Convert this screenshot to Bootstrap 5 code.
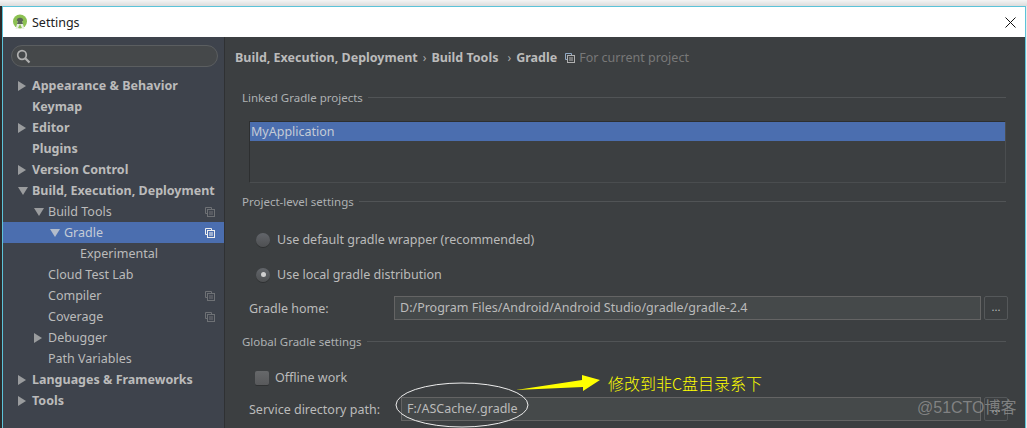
<!DOCTYPE html>
<html lang="zh">
<head>
<meta charset="utf-8">
<title>Settings</title>
<link href="https://cdn.jsdelivr.net/npm/bootstrap@5.3.0/dist/css/bootstrap.min.css" rel="stylesheet">
<style>
html,body{height:428px;overflow:hidden;background:#ececec;}
body{font-family:"Noto Sans","Noto Sans CJK SC",sans-serif;font-size:12.5px;line-height:21px;position:relative;}
.strip-top{height:6px;background:linear-gradient(#f4f4f4,#dcdcdc);}
.strip-left{width:2px;background:#2b2b2b;}
.win{width:1024px;height:422px;border:1px solid #5cc3d9;border-bottom:0;margin-right:1px;background:#3c3f41;}
.titlebar{height:30px;background:#fff;color:#222;padding-left:9px;}
.titlebar .t{margin-left:4px;}
.x-btn{margin-right:9px;}
.side{width:222px;background:#3e434c;border-right:1px solid #2f3133;flex:none;}
.srch{height:22px;margin:8px 6px 8px 8px;border:1px solid #5b5e60;border-radius:11px;background:#45484a;padding-left:4px;}
.tree-row{height:21px;color:#bbbbbb;white-space:nowrap;padding-right:9px;}
.tree-row.b{font-weight:700;}
.tree-row.sel{background:#4b6eaf;color:#c4cbd6;}
.lv0{padding-left:15px;}.lv1{padding-left:31px;}.lv2{padding-left:47px;}.lv3{padding-left:77px;}
.tw{width:14px;flex:none;display:flex;align-items:center;}
.tw-none{width:14px;flex:none;}
.tree-ic{margin-left:auto;}
.pane{padding:10px 17px 0 10px;color:#bbbbbb;min-width:0;}
.crumb{height:21px;font-weight:700;white-space:nowrap;}
.crumb .sep{font-weight:400;margin:0 5px;font-size:12px;color:#aaa;}
.crumb .sep2{margin-left:9px;}
.crumb .fcp{font-weight:400;color:#787878;margin-left:4px;}
.grp{height:21px;margin:0 2px 0 7px;color:#aeb1b3;font-size:11.5px;white-space:nowrap;}
.grp::after{content:"";flex:1;border-top:1px solid #515456;margin-left:5px;}
.g1{margin-top:19px;}.g2{margin-top:8px;}.g3{margin-top:11px;}
.listb{margin:13px 2px 0 14px;height:62px;border-left:1px solid #2d2f30;border-top:1px solid #2d2f30;border-bottom:1px solid #4a4d4f;border-right:1px solid #4a4d4f;background:#3c3f41;}
.listb div{height:19px;line-height:19px;background:#4b6eaf;color:#c4cbd6;padding-left:1px;}
.opt{height:21px;color:#bbb;margin-left:21px;}
.o1{margin-top:17px;}.o2{margin-top:14px;}.o3{margin-top:15px;margin-left:20px;}
.rad{width:14px;height:14px;border-radius:50%;background:linear-gradient(#62656a,#4e5052);box-shadow:0 1px 0 #2f3132;margin-right:7px;flex:none;display:flex;align-items:center;justify-content:center;}
.rad i{width:5px;height:5px;border-radius:50%;background:#d0d0d0;display:block;}
.chk{width:14px;height:14px;border-radius:2px;background:linear-gradient(#66686a,#58595b);box-shadow:0 1px 0 #2f3132;margin-right:6px;flex:none;}
.fld{height:24px;margin-left:14px;}
.f1{margin-top:11px;}.f2{margin-top:9px;}
.fld .lb{flex:none;color:#bbb;}
.lb1{width:145px;}.lb2{width:152px;}
.inp{height:24px;flex:1;background:#45494a;border:1px solid #646464;color:#bbb;padding-left:5px;line-height:22px;white-space:nowrap;overflow:hidden;min-width:0;}
.dots{width:24px;height:24px;margin-left:3px;border:1px solid #55585a;border-radius:2px;flex:none;background:#3c3f41;text-align:center;line-height:20px;color:#bbb;font-size:11px;}
.note{position:absolute;left:608px;top:372px;color:#ff0;font-size:16px;line-height:22px;font-family:"Noto Sans CJK SC",sans-serif;white-space:nowrap;font-weight:300;}
.wm{position:absolute;left:917px;top:396px;color:rgba(150,150,150,.75);font-size:16px;line-height:24px;font-family:"Liberation Sans","Noto Sans CJK SC",sans-serif;white-space:nowrap;}
.over{position:absolute;left:0;top:0;pointer-events:none;}
</style>
</head>
<body>
<div class="strip-top"></div>
<div class="d-flex">
  <div class="strip-left"></div>
  <div class="win d-flex flex-column">
    <div class="titlebar d-flex align-items-center flex-shrink-0">
      <svg width="16" height="16" viewBox="0 0 16 16"><circle cx="8" cy="7.500" r="7" fill="#8cc152"/><path d="M3.500 15 6 7h4l2.500 8h-2L8 10l-2.500 5z" fill="#e9eee4"/><path d="M4.800 7a3.200 3.200 0 0 1 6.400 0z" fill="#5b655a"/><path d="M6 7h4l1 3H5z" fill="#5b655a"/></svg>
      <span class="t">Settings</span>
      <svg class="x-btn ms-auto" width="11" height="11" viewBox="0 0 11 11"><path d="M.5.500l10 10M10.500.500l-10 10" stroke="#111" stroke-width="1" fill="none"/></svg>
    </div>
    <div class="d-flex flex-grow-1 overflow-hidden">
      <div class="side">
        <div class="srch d-flex align-items-center">
          <svg width="15" height="15" viewBox="0 0 15 15"><circle cx="6" cy="6" r="4.300" fill="none" stroke="#b0b0b0" stroke-width="1.700"/><path d="M9.200 9.200l4.300 4.300" stroke="#b0b0b0" stroke-width="2.200"/></svg>
        </div>
        <div class="tree-row b lv0 d-flex align-items-center"><span class="tw"><svg width="8" height="10" viewBox="0 0 8 10"><path d="M0 0l8 5-8 5z" fill="#9a9c9e"/></svg></span>Appearance &amp; Behavior</div>
        <div class="tree-row b lv0 d-flex align-items-center"><span class="tw-none"></span>Keymap</div>
        <div class="tree-row b lv0 d-flex align-items-center"><span class="tw"><svg width="8" height="10" viewBox="0 0 8 10"><path d="M0 0l8 5-8 5z" fill="#9a9c9e"/></svg></span>Editor</div>
        <div class="tree-row b lv0 d-flex align-items-center"><span class="tw-none"></span>Plugins</div>
        <div class="tree-row b lv0 d-flex align-items-center"><span class="tw"><svg width="8" height="10" viewBox="0 0 8 10"><path d="M0 0l8 5-8 5z" fill="#9a9c9e"/></svg></span>Version Control</div>
        <div class="tree-row b lv0 d-flex align-items-center"><span class="tw"><svg width="10" height="8" viewBox="0 0 10 8"><path d="M0 0h10l-5 8z" fill="#9a9c9e"/></svg></span>Build, Execution, Deployment</div>
        <div class="tree-row lv1 d-flex align-items-center"><span class="tw"><svg width="10" height="8" viewBox="0 0 10 8"><path d="M0 0h10l-5 8z" fill="#9a9c9e"/></svg></span>Build Tools<svg class="tree-ic" width="10" height="10" viewBox="0 0 10 10"><path d="M.5.500h6v2M.5.500v6h2" fill="none" stroke="#6e7175"/><rect x="2.500" y="2.500" width="7" height="7" fill="none" stroke="#6e7175"/><path d="M4 5h4M4 7h4" stroke="#6e7175"/></svg></div>
        <div class="tree-row sel lv2 d-flex align-items-center"><span class="tw"><svg width="10" height="8" viewBox="0 0 10 8"><path d="M0 0h10l-5 8z" fill="#b3bccb"/></svg></span>Gradle<svg class="tree-ic" width="10" height="10" viewBox="0 0 10 10"><path d="M.5.500h6v2M.5.500v6h2" fill="none" stroke="#f0f0f0"/><rect x="2.500" y="2.500" width="7" height="7" fill="none" stroke="#f0f0f0"/><path d="M4 5h4M4 7h4" stroke="#f0f0f0"/></svg></div>
        <div class="tree-row lv3 d-flex align-items-center">Experimental</div>
        <div class="tree-row lv1 d-flex align-items-center"><span class="tw-none"></span>Cloud Test Lab</div>
        <div class="tree-row lv1 d-flex align-items-center"><span class="tw-none"></span>Compiler<svg class="tree-ic" width="10" height="10" viewBox="0 0 10 10"><path d="M.5.500h6v2M.5.500v6h2" fill="none" stroke="#6e7175"/><rect x="2.500" y="2.500" width="7" height="7" fill="none" stroke="#6e7175"/><path d="M4 5h4M4 7h4" stroke="#6e7175"/></svg></div>
        <div class="tree-row lv1 d-flex align-items-center"><span class="tw-none"></span>Coverage<svg class="tree-ic" width="10" height="10" viewBox="0 0 10 10"><path d="M.5.500h6v2M.5.500v6h2" fill="none" stroke="#6e7175"/><rect x="2.500" y="2.500" width="7" height="7" fill="none" stroke="#6e7175"/><path d="M4 5h4M4 7h4" stroke="#6e7175"/></svg></div>
        <div class="tree-row lv1 d-flex align-items-center"><span class="tw"><svg width="8" height="10" viewBox="0 0 8 10"><path d="M0 0l8 5-8 5z" fill="#9a9c9e"/></svg></span>Debugger</div>
        <div class="tree-row lv1 d-flex align-items-center"><span class="tw-none"></span>Path Variables</div>
        <div class="tree-row b lv0 d-flex align-items-center"><span class="tw"><svg width="8" height="10" viewBox="0 0 8 10"><path d="M0 0l8 5-8 5z" fill="#9a9c9e"/></svg></span>Languages &amp; Frameworks</div>
        <div class="tree-row b lv0 d-flex align-items-center"><span class="tw"><svg width="8" height="10" viewBox="0 0 8 10"><path d="M0 0l8 5-8 5z" fill="#9a9c9e"/></svg></span>Tools</div>
      </div>
      <div class="pane flex-grow-1">
        <div class="crumb d-flex align-items-center">Build, Execution, Deployment<span class="sep">›</span>Build Tools<span class="sep sep2">›</span>Gradle<svg class="ms-2" width="10" height="10" viewBox="0 0 10 10"><path d="M.5.500h6v2M.5.500v6h2" fill="none" stroke="#8fa8c4"/><rect x="2.500" y="2.500" width="7" height="7" fill="#3c3f41" stroke="#b0b0b0"/><path d="M4 5h4M4 7h4" stroke="#b0b0b0"/></svg><span class="fcp">For current project</span></div>
        <div class="grp g1 d-flex align-items-center">Linked Gradle projects</div>
        <div class="listb"><div>MyApplication</div></div>
        <div class="grp g2 d-flex align-items-center">Project-level settings</div>
        <div class="opt o1 d-flex align-items-center"><span class="rad"></span>Use default gradle wrapper (recommended)</div>
        <div class="opt o2 d-flex align-items-center"><span class="rad"><i></i></span>Use local gradle distribution</div>
        <div class="fld f1 d-flex align-items-center"><span class="lb lb1">Gradle home:</span><div class="inp">D:/Program Files/Android/Android Studio/gradle/gradle-2.4</div><div class="dots">...</div></div>
        <div class="grp g3 d-flex align-items-center">Global Gradle settings</div>
        <div class="opt o3 d-flex align-items-center"><span class="chk"></span>Offline work</div>
        <div class="fld f2 d-flex align-items-center"><span class="lb lb2">Service directory path:</span><div class="inp">F:/ASCache/.gradle</div><div class="dots">...</div></div>
      </div>
    </div>
  </div>
</div>
<svg class="over" width="1027" height="428" viewBox="0 0 1027 428">
  <ellipse cx="462" cy="405" rx="66" ry="22" fill="none" stroke="#ededed" stroke-width="1"/>
  <path d="M516 390 582 380 582 375 600 380 583 391 583 387z" fill="#ffff00"/>
</svg>
<div class="note">修改到非C盘目录系下</div>
<div class="wm">@51CTO博客</div>
</body>
</html>
